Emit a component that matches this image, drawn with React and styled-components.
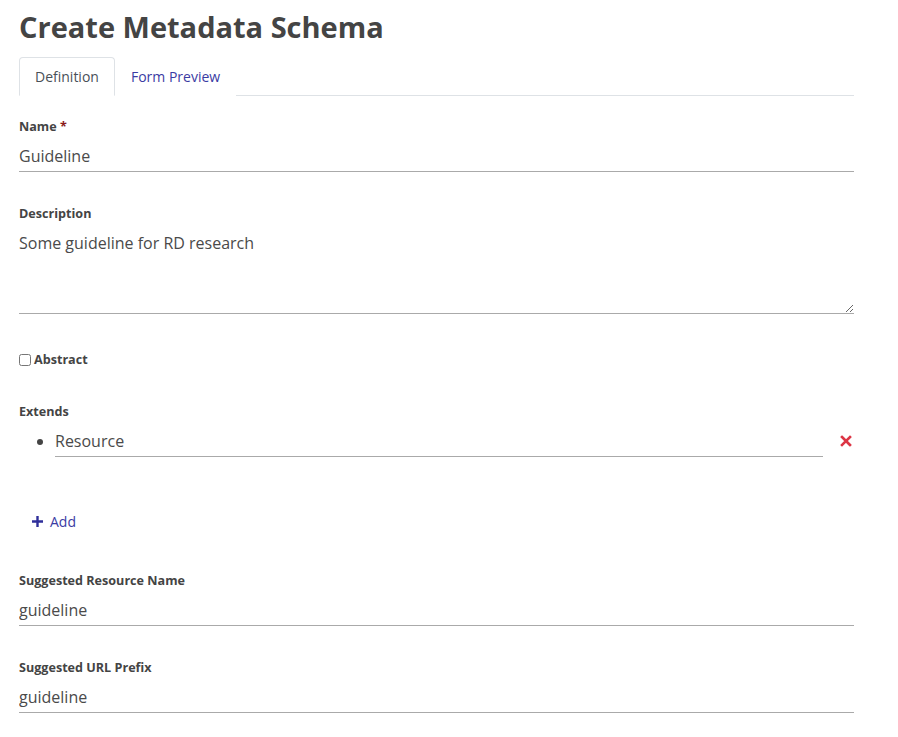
import React from 'react'
import styled, { createGlobalStyle } from 'styled-components'

const GlobalStyle = createGlobalStyle`
  body {
    margin: 0;
    background: #fff;
    font-family: "Open Sans", "Liberation Sans", sans-serif;
    color: #444;
  }
`

const App = () => {
  return (
    <Page>
      <GlobalStyle />
      <Title>Create Metadata Schema</Title>
      <Tabs>
        <Tab active>Definition</Tab>
        <Tab>Form Preview</Tab>
      </Tabs>

      <Field>
        <Label>Name <Req>*</Req></Label>
        <Input defaultValue="Guideline" />
      </Field>

      <Field>
        <Label>Description</Label>
        <TextArea defaultValue="Some guideline for RD research" />
      </Field>

      <CheckRow>
        <Check type="checkbox" />
        <CheckLabel>Abstract</CheckLabel>
      </CheckRow>

      <Field>
        <Label>Extends</Label>
        <List>
          <ListItem>
            <Input defaultValue="Resource" />
            <Remove>
              <svg width="12" height="12" viewBox="0 0 12 12">
                <path d="M2 2 L10 10 M10 2 L2 10" stroke="#dc3545" strokeWidth="2.6" strokeLinecap="square" />
              </svg>
            </Remove>
          </ListItem>
        </List>
      </Field>

      <AddButton>
        <svg width="13" height="13" viewBox="0 0 13 13">
          <path d="M6.5 1 V12 M1 6.5 H12" stroke="#2f2f9a" strokeWidth="2.4" />
        </svg>
        Add
      </AddButton>

      <Field>
        <Label>Suggested Resource Name</Label>
        <Input defaultValue="guideline" />
      </Field>

      <Field>
        <Label>Suggested URL Prefix</Label>
        <Input defaultValue="guideline" />
      </Field>
    </Page>
  )
}

const Page = styled.div`
  width: 835px;
  padding: 8px 0 0 19px;
`

const Title = styled.h1`
  margin: 0 0 11px;
  font-size: 29px;
  font-weight: 700;
  line-height: 38px;
  color: #444;
`

const Tabs = styled.div`
  display: flex;
  border-bottom: 1px solid #dee2e6;
  margin-bottom: 22px;
`

const Tab = styled.div`
  padding: 8px 15px;
  font-size: 14px;
  line-height: 21px;
  margin-bottom: -1px;
  border: 1px solid ${p => (p.active ? '#dee2e6' : 'transparent')};
  border-bottom-color: ${p => (p.active ? '#fff' : 'transparent')};
  border-radius: 4px 4px 0 0;
  color: ${p => (p.active ? '#495057' : '#3b3ba3')};
  background: #fff;
`

const Field = styled.div`
  margin-bottom: 33px;
`

const Label = styled.div`
  font-size: 12.6px;
  font-weight: 700;
  line-height: 18px;
  color: #444;
  margin-bottom: 4px;
`

const Req = styled.span`
  color: #8b1a1a;
`

const Input = styled.input`
  display: block;
  width: 100%;
  box-sizing: border-box;
  border: none;
  border-bottom: 1px solid #aaa;
  padding: 4px 0 3px;
  font-family: "Open Sans", "Liberation Sans", sans-serif;
  font-size: 16px;
  line-height: 24px;
  color: #4a4a4a;
  background: transparent;
  outline: none;
`

const TextArea = styled.textarea`
  display: block;
  width: 100%;
  box-sizing: border-box;
  height: 87px;
  border: none;
  border-bottom: 1px solid #aaa;
  padding: 4px 0 3px;
  font-family: "Open Sans", "Liberation Sans", sans-serif;
  font-size: 16px;
  line-height: 24px;
  color: #4a4a4a;
  resize: vertical;
  outline: none;
`

const CheckRow = styled.label`
  display: flex;
  align-items: center;
  gap: 3px;
  padding-top: 4px;
  margin-bottom: 34px;
`

const Check = styled.input`
  margin: 0;
  width: 12px;
  height: 12px;
`

const CheckLabel = styled.span`
  font-size: 12.6px;
  font-weight: 700;
  line-height: 18px;
`

const List = styled.ul`
  margin: 0;
  padding-left: 36px;
`

const ListItem = styled.li`
  position: relative;
  width: 768px;
  font-size: 16px;
`

const Remove = styled.span`
  position: absolute;
  right: -29px;
  top: 5px;
  cursor: pointer;
`

const AddButton = styled.div`
  display: flex;
  align-items: center;
  gap: 6px;
  margin: 55px 0 41px 12px;
  font-size: 14px;
  color: #3b3ba3;
`

export default App
